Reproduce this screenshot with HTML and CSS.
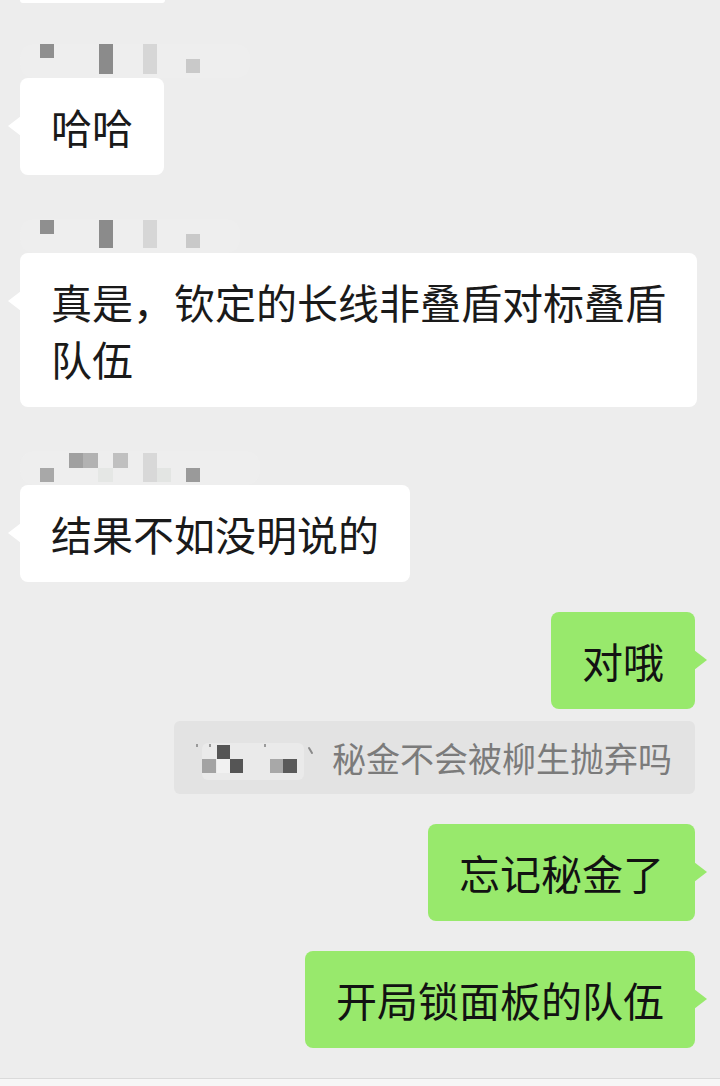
FILE: index.html
```html
<!DOCTYPE html>
<html lang="zh-CN">

<head>
    <meta charset="UTF-8">
    <meta name="viewport" content="width=device-width, initial-scale=1.0">
    <title>聊天</title>
    <link rel="stylesheet" href="styles.css">
</head>

<body>

    <div class="chat">
        <div class="msg left">
            <div class="bubble white stub"></div>
        </div>

        <div class="msg left first">
            <svg class="name" width="240" height="34" viewBox="0 0 240 34">
                <rect x="0" y="0" width="230" height="34" rx="14" fill="#f0f0f0" opacity="0.45" />
                <rect x="20" y="0" width="14" height="14" fill="#8f8f8f" />
                <rect x="79" y="0" width="14" height="30" fill="#8b8b8b" />
                <rect x="123" y="0" width="14" height="30" fill="#d6d6d6" />
                <rect x="166" y="15" width="14" height="14" fill="#c9c9c9" />
            </svg>
            <div class="bubble white">哈哈</div>
        </div>

        <div class="msg left">
            <svg class="name" width="240" height="34" viewBox="0 0 240 34">
                <rect x="0" y="0" width="220" height="34" rx="14" fill="#f0f0f0" opacity="0.45" />
                <rect x="20" y="1" width="14" height="14" fill="#8f8f8f" />
                <rect x="79" y="1" width="14" height="28" fill="#8b8b8b" />
                <rect x="123" y="1" width="14" height="28" fill="#d6d6d6" />
                <rect x="166" y="15" width="14" height="14" fill="#c9c9c9" />
            </svg>
            <div class="bubble white">真是，钦定的长线非叠盾对标叠盾队伍</div>
        </div>

        <div class="msg left">
            <svg class="name" width="240" height="34" viewBox="0 0 240 34">
                <rect x="0" y="0" width="240" height="34" rx="14" fill="#f0f0f0" opacity="0.45" />
                <rect x="20" y="17" width="14" height="14" fill="#a8a8a8" />
                <rect x="49" y="2" width="14" height="15" fill="#a0a0a0" />
                <rect x="63" y="2" width="15" height="15" fill="#b2b2b2" />
                <rect x="78" y="17" width="15" height="14" fill="#e5e7e5" />
                <rect x="93" y="2" width="15" height="15" fill="#c0c0c0" />
                <rect x="123" y="2" width="14" height="29" fill="#d8d8d8" />
                <rect x="137" y="17" width="14" height="14" fill="#e3e5e3" />
                <rect x="166" y="17" width="14" height="14" fill="#9a9a9a" />
            </svg>
            <div class="bubble white">结果不如没明说的</div>
        </div>

        <div class="msg right gap">
            <div class="bubble green">对哦</div>
        </div>

        <div class="msg right near">
            <div class="quote">
                <svg class="quote-name" width="112" height="45" viewBox="0 0 112 45">
                    <rect x="0" y="8" width="102" height="37" rx="6" fill="#eaeaea" />
                    <rect x="-6" y="9" width="2" height="3" fill="#9a9a9a" />
                    <rect x="7" y="9" width="2" height="3" fill="#9a9a9a" />
                    <rect x="0" y="24" width="14" height="14" fill="#a3a3a3" />
                    <rect x="15" y="10" width="13" height="14" fill="#555555" />
                    <rect x="15" y="24" width="13" height="14" fill="#f1f1f1" />
                    <rect x="28" y="24" width="13" height="14" fill="#555555" />
                    <rect x="62" y="9" width="2" height="3" fill="#9a9a9a" />
                    <rect x="68" y="24" width="13" height="14" fill="#a8a8a8" />
                    <rect x="81" y="24" width="14" height="14" fill="#5a5a5a" />
                    <path d="M107 13 l3 5" stroke="#8a8a8a" stroke-width="2" stroke-linecap="round" />
                </svg>
                <span class="quote-text">秘金不会被柳生抛弃吗</span>
            </div>
        </div>

        <div class="msg right gap">
            <div class="bubble green">忘记秘金了</div>
        </div>

        <div class="msg right gap">
            <div class="bubble green">开局锁面板的队伍</div>
        </div>

        <div class="bottom-bar"></div>
    </div>

</body>

</html>
```

FILE: styles.css
```css
body {
    font-family: "Noto Sans CJK SC", "Noto Sans", sans-serif;
    background-color: #ededed;
    margin: 0;
    padding: 0;
}

.chat {
    display: flex;
    flex-direction: column;
    width: 720px;
    height: 1086px;
    overflow: hidden;
}

.msg {
    display: flex;
    flex-direction: column;
}

.msg.left {
    align-items: flex-start;
    padding-left: 20px;
    margin-top: 44px;
}

.msg.left:first-child {
    margin-top: 0;
}

.msg.first {
    margin-top: 41px;
}

.msg.right {
    align-items: flex-end;
    padding-right: 25px;
}

.msg.gap {
    margin-top: 30px;
}

.msg.near {
    margin-top: 12px;
}

.name {
    display: block;
}

.bubble {
    position: relative;
    box-sizing: border-box;
    max-width: 677px;
    padding: 20px 31px 20px 31px;
    border-radius: 8px;
    font-size: 41px;
    line-height: 57px;
    color: #1a1a1a;
}

.bubble.white {
    background-color: #ffffff;
}

.bubble.green {
    background-color: #98e96c;
    color: #121212;
}

.bubble.white::before {
    content: "";
    position: absolute;
    left: -12px;
    top: 38px;
    border-top: 10px solid transparent;
    border-bottom: 10px solid transparent;
    border-right: 13px solid #ffffff;
}

.bubble.green::after {
    content: "";
    position: absolute;
    right: -12px;
    top: 38px;
    border-top: 10px solid transparent;
    border-bottom: 10px solid transparent;
    border-left: 13px solid #98e96c;
}

.bubble.stub {
    width: 145px;
    height: 3px;
    padding: 0;
    border-radius: 0 0 6px 6px;
}

.bubble.stub::before {
    display: none;
}

.quote {
    display: flex;
    align-items: center;
    gap: 18px;
    padding: 14px 23px 14px 28px;
    background-color: #e3e3e3;
    border-radius: 6px;
}

.quote-name {
    display: block;
    overflow: visible;
}

.quote-text {
    font-size: 34px;
    line-height: 45px;
    color: #7b7b7b;
}

.bottom-bar {
    margin-top: 30px;
    flex: 1;
    border-top: 1px solid #dadada;
    background-color: #f6f6f6;
}
```
